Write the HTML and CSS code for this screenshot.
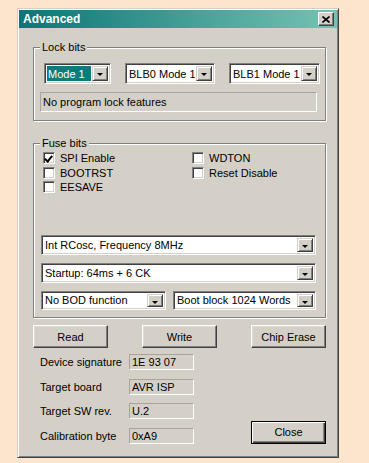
FILE: index.html
```html
<!DOCTYPE html>
<html lang="en">
<head>
    <meta charset="UTF-8">
    <title>Advanced</title>
    <link rel="stylesheet" href="styles.css">
</head>
<body>
    <div class="dialog">
        <div class="title-bar">
            <span class="title">Advanced</span>
            <button class="title-close">
                <svg width="8" height="7" viewBox="0 0 8 7"><path d="M0.5 0.5 L7.5 6.5 M7.5 0.5 L0.5 6.5" stroke="#000" stroke-width="1.6"/></svg>
            </button>
        </div>

        <div class="content">
            <div class="group lock-group">
                <div class="group-title">Lock bits</div>
                <div class="combo-row">
                    <div class="combo w67"><span class="combo-text selected">Mode 1</span><span class="combo-btn"></span></div>
                    <div class="combo w90"><span class="combo-text">BLB0 Mode 1</span><span class="combo-btn"></span></div>
                    <div class="combo w91"><span class="combo-text">BLB1 Mode 1</span><span class="combo-btn"></span></div>
                </div>
                <div class="field lock-field">No program lock features</div>
            </div>

            <div class="group fuse-group">
                <div class="group-title">Fuse bits</div>
                <div class="checks">
                    <div class="check-col">
                        <label class="check"><span class="box checked"></span>SPI Enable</label>
                        <label class="check"><span class="box"></span>BOOTRST</label>
                        <label class="check"><span class="box"></span>EESAVE</label>
                    </div>
                    <div class="check-col">
                        <label class="check"><span class="box"></span>WDTON</label>
                        <label class="check"><span class="box"></span>Reset Disable</label>
                    </div>
                </div>
                <div class="fuse-combos">
                    <div class="combo"><span class="combo-text">Int RCosc, Frequency 8MHz</span><span class="combo-btn"></span></div>
                    <div class="combo"><span class="combo-text">Startup: 64ms + 6 CK</span><span class="combo-btn"></span></div>
                    <div class="combo-pair">
                        <div class="combo w125"><span class="combo-text">No BOD function</span><span class="combo-btn"></span></div>
                        <div class="combo w143"><span class="combo-text">Boot block 1024 Words</span><span class="combo-btn"></span></div>
                    </div>
                </div>
            </div>

            <div class="buttons">
                <button class="btn">Read</button>
                <button class="btn">Write</button>
                <button class="btn">Chip Erase</button>
            </div>

            <div class="info">
                <div class="info-list">
                    <div class="info-row"><span class="info-label">Device signature</span><span class="info-value">1E 93 07</span></div>
                    <div class="info-row"><span class="info-label">Target board</span><span class="info-value">AVR ISP</span></div>
                    <div class="info-row"><span class="info-label">Target SW rev.</span><span class="info-value">U.2</span></div>
                    <div class="info-row"><span class="info-label">Calibration byte</span><span class="info-value">0xA9</span></div>
                </div>
                <button class="btn default">Close</button>
            </div>
        </div>
    </div>
</body>
</html>
```

FILE: styles.css
```css
* {
    box-sizing: border-box;
    margin: 0;
    padding: 0;
}

body {
    background-color: #fde5cd;
    font-family: 'Liberation Sans', Arial, sans-serif;
    font-size: 11px;
    color: #000;
}

.dialog {
    margin: 8px 0 0 17px;
    width: 322px;
    height: 450px;
    padding: 1px;
    background-color: #d4d0c8;
    border: 1px solid;
    border-color: #d4d0c8 #404040 #404040 #d4d0c8;
    box-shadow: inset 1px 1px #fff, inset -1px -1px #808080;
}

.title-bar {
    height: 18px;
    display: flex;
    align-items: center;
    justify-content: space-between;
    padding: 0 3px 0 4px;
    background: linear-gradient(to right, #0b7676, #76c3b3);
}

.title {
    color: #fff;
    font-weight: bold;
    font-size: 12px;
}

.title-close {
    width: 16px;
    height: 14px;
    display: flex;
    align-items: center;
    justify-content: center;
    background-color: #d4d0c8;
    border: 1px solid;
    border-color: #fff #404040 #404040 #fff;
    box-shadow: inset -1px -1px #808080;
}

.content {
    padding: 0 0 0 14px;
}

.group {
    width: 293px;
    border: 1px solid #808080;
    box-shadow: 1px 1px #fff, inset 1px 1px #fff;
}

.group-title {
    width: fit-content;
    margin: -7px 0 0 6px;
    padding: 0 2px;
    line-height: 13px;
    background-color: #d4d0c8;
}

.lock-group {
    margin-top: 19px;
    height: 74px;
}

.combo-row {
    display: flex;
    gap: 14px;
    margin: 9px 0 0 10px;
}

.combo {
    height: 20px;
    display: flex;
    align-items: stretch;
    padding: 2px;
    background-color: #fff;
    border: 1px solid;
    border-color: #808080 #fff #fff #808080;
    box-shadow: inset 1px 1px #404040, inset -1px -1px #d4d0c8;
}

.combo-row .combo {
    height: 21px;
}

.combo-text {
    flex: 1;
    display: flex;
    align-items: center;
    padding-left: 1px;
    white-space: nowrap;
    overflow: hidden;
}

.combo-text.selected {
    background-color: #0b7b7b;
    color: #fff;
}

.combo-btn {
    width: 16px;
    margin-left: 1px;
    background-color: #d4d0c8;
    border: 1px solid;
    border-color: #d4d0c8 #404040 #404040 #d4d0c8;
    box-shadow: inset 1px 1px #fff, inset -1px -1px #808080;
    position: relative;
}

.combo-btn::after {
    content: "";
    position: absolute;
    left: 4px;
    top: 6px;
    border-left: 3px solid transparent;
    border-right: 3px solid transparent;
    border-top: 3px solid #000;
}

.w67 { width: 67px; }
.w90 { width: 90px; }
.w91 { width: 91px; }
.w125 { width: 125px; }
.w143 { width: 143px; }

.field {
    height: 20px;
    display: flex;
    align-items: center;
    padding-left: 2px;
    border: 1px solid;
    border-color: #a8a49c #fff #fff #a8a49c;
}

.lock-field {
    width: 277px;
    margin: 8px 0 0 6px;
}

.fuse-group {
    margin-top: 22px;
    height: 175px;
}

.checks {
    display: flex;
    margin: 1px 0 0 9px;
}

.check-col {
    width: 149px;
    flex-shrink: 0;
}

.check-col + .check-col {
    width: auto;
    flex: 1;
}

.check {
    height: 14.5px;
    display: flex;
    align-items: center;
    gap: 5px;
}

.box {
    width: 12px;
    height: 12px;
    background-color: #fff;
    border: 1px solid;
    border-color: #808080 #fff #fff #808080;
    box-shadow: inset 1px 1px #404040, inset -1px -1px #d4d0c8;
    position: relative;
}

.box.checked::after {
    content: "";
    position: absolute;
    left: 2px;
    top: 1px;
    width: 3px;
    height: 6px;
    border: solid #000;
    border-width: 0 2px 2px 0;
    transform: rotate(40deg);
}

.fuse-combos {
    display: flex;
    flex-direction: column;
    gap: 8px;
    margin: 40px 0 0 7px;
    width: 275px;
}

.combo-pair {
    display: flex;
    justify-content: space-between;
}

.combo-pair .combo {
    height: 19px;
}

.buttons {
    width: 293px;
    display: flex;
    justify-content: space-between;
    margin-top: 7px;
}

.btn {
    width: 75px;
    height: 23px;
    font-family: inherit;
    font-size: 11px;
    color: #000;
    background-color: #d4d0c8;
    border: 1px solid;
    border-color: #fff #404040 #404040 #fff;
    box-shadow: inset -1px -1px #808080, inset 1px 1px #dfdcd4;
}

.btn.default {
    border: 1px solid #000;
    box-shadow: inset 1px 1px #fff, inset -1px -1px #404040, inset -2px -2px #808080;
}

.info {
    width: 293px;
    display: flex;
    justify-content: space-between;
    align-items: flex-end;
    margin-top: 6px;
}

.info-list {
    display: flex;
    flex-direction: column;
    gap: 8.5px;
    padding-left: 7px;
}

.info-row {
    display: flex;
    align-items: center;
    height: 16px;
}

.info-label {
    width: 89px;
    white-space: nowrap;
}

.info-value {
    width: 65px;
    height: 16px;
    display: flex;
    align-items: center;
    padding-left: 2px;
    border: 1px solid;
    border-color: #a8a49c #fff #fff #a8a49c;
}
```
